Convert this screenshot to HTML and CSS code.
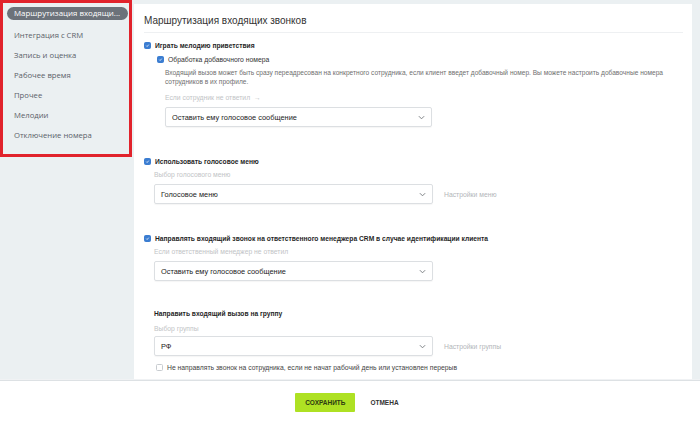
FILE: index.html
```html
<!DOCTYPE html>
<html lang="ru">
<head>
    <meta charset="UTF-8">
    <meta name="viewport" content="width=device-width, initial-scale=1.0">
    <title>Маршрутизация входящих звонков</title>
    <link rel="stylesheet" href="styles.css">
</head>
<body>
    <div class="app">
        <div class="workspace">
            <nav class="sidebar">
                <a class="nav-item active">Маршрутизация входящи...</a>
                <a class="nav-item">Интеграция с CRM</a>
                <a class="nav-item">Запись и оценка</a>
                <a class="nav-item">Рабочее время</a>
                <a class="nav-item">Прочее</a>
                <a class="nav-item">Мелодии</a>
                <a class="nav-item">Отключение номера</a>
                <div class="highlight"></div>
            </nav>
            <main class="card">
                <h1 class="card-title">Маршрутизация входящих звонков</h1>

                <section class="block block-first">
                    <label class="check-row strong">
                        <span class="checkbox checked"><svg viewBox="0 0 8 8"><path d="M2 4.2 L3.4 5.6 L6 2.6" /></svg></span>
                        Играть мелодию приветствия
                    </label>
                    <div class="nested">
                        <label class="check-row">
                            <span class="checkbox checked"><svg viewBox="0 0 8 8"><path d="M2 4.2 L3.4 5.6 L6 2.6" /></svg></span>
                            Обработка добавочного номера
                        </label>
                        <p class="desc">Входящий вызов может быть сразу переадресован на конкретного сотрудника, если клиент введет добавочный номер. Вы можете настроить добавочные номера сотрудников в их профиле.</p>
                        <div class="hint">Если сотрудник не ответил &nbsp;→</div>
                        <div class="field-row">
                            <div class="select select-short">
                                <span>Оставить ему голосовое сообщение</span>
                                <svg class="chevron" viewBox="0 0 8 5"><path d="M1 1 L4 4 L7 1" /></svg>
                            </div>
                        </div>
                    </div>
                </section>

                <section class="block">
                    <label class="check-row strong">
                        <span class="checkbox checked"><svg viewBox="0 0 8 8"><path d="M2 4.2 L3.4 5.6 L6 2.6" /></svg></span>
                        Использовать голосовое меню
                    </label>
                    <div class="indent">
                        <div class="hint">Выбор голосового меню</div>
                        <div class="field-row">
                            <div class="select">
                                <span>Голосовое меню</span>
                                <svg class="chevron" viewBox="0 0 8 5"><path d="M1 1 L4 4 L7 1" /></svg>
                            </div>
                            <a class="side-link">Настройки меню</a>
                        </div>
                    </div>
                </section>

                <section class="block">
                    <label class="check-row strong">
                        <span class="checkbox checked"><svg viewBox="0 0 8 8"><path d="M2 4.2 L3.4 5.6 L6 2.6" /></svg></span>
                        Направлять входящий звонок на ответственного менеджера CRM в случае идентификации клиента
                    </label>
                    <div class="indent">
                        <div class="hint">Если ответственный менеджер не ответил</div>
                        <div class="field-row">
                            <div class="select">
                                <span>Оставить ему голосовое сообщение</span>
                                <svg class="chevron" viewBox="0 0 8 5"><path d="M1 1 L4 4 L7 1" /></svg>
                            </div>
                        </div>
                    </div>
                </section>

                <section class="block block-group">
                    <div class="indent">
                        <div class="group-title">Направить входящий вызов на группу</div>
                        <div class="hint hint-group">Выбор группы</div>
                        <div class="field-row">
                            <div class="select">
                                <span>РФ</span>
                                <svg class="chevron" viewBox="0 0 8 5"><path d="M1 1 L4 4 L7 1" /></svg>
                            </div>
                            <a class="side-link">Настройки группы</a>
                        </div>
                        <label class="check-row plain-row">
                            <span class="checkbox"></span>
                            Не направлять звонок на сотрудника, если не начат рабочий день или установлен перерыв
                        </label>
                    </div>
                </section>
            </main>
        </div>
        <footer class="footer">
            <button class="btn-save">СОХРАНИТЬ</button>
            <button class="btn-cancel">ОТМЕНА</button>
        </footer>
    </div>
</body>
</html>
```

FILE: styles.css
```css
body {
    margin: 0;
    padding: 0;
    font-family: "Liberation Sans", Arial, sans-serif;
    background-color: #fff;
    color: #222;
}
.app {
    display: flex;
    flex-direction: column;
    width: 700px;
    height: 423px;
    overflow: hidden;
}
.workspace {
    display: flex;
    height: 380px;
    background-color: #ebf0f2;
    padding-top: 4px;
    box-sizing: border-box;
}
.sidebar {
    position: relative;
    width: 133px;
    flex: none;
    display: flex;
    flex-direction: column;
    padding: 6px 0 0 7px;
    box-sizing: border-box;
    margin-top: -4px;
    font-family: "Open Sans", sans-serif;
}
.nav-item {
    display: block;
    height: 20px;
    line-height: 20px;
    padding-left: 7px;
    font-size: 7.7px;
    color: #5a6169;
    white-space: nowrap;
}
.nav-item.active {
    height: 13px;
    line-height: 13px;
    width: 114px;
    margin: 1px 0 5px 0;
    padding-left: 7px;
    border-radius: 7px;
    background-color: #6c727a;
    color: #fff;
    font-size: 7.9px;
    overflow: hidden;
}
.highlight {
    position: absolute;
    left: 0;
    top: 0;
    width: 132px;
    height: 157px;
    border: 3px solid #e1232c;
    box-sizing: border-box;
}
.card {
    flex: 1;
    margin: 0 8px 0 1px;
    background-color: #fff;
    padding: 0 9px 0 10px;
}
.card-title {
    margin: 0;
    padding: 10px 0 4px 0;
    font-family: "Liberation Sans", Arial, sans-serif;
    font-size: 10px;
    line-height: 14px;
    font-weight: normal;
    color: #333;
    border-bottom: 1px solid #eef0f2;
}
.block {
    margin-top: 29px;
}
.block-first {
    margin-top: 7px;
}
.block-group {
    margin-top: 28px;
}
.check-row {
    display: flex;
    align-items: center;
    gap: 4px;
    height: 10px;
    font-size: 6.8px;
    color: #333;
    white-space: nowrap;
}
.check-row.strong {
    font-size: 6.7px;
    font-weight: bold;
    color: #1f1f1f;
}
.checkbox {
    width: 7px;
    height: 7px;
    flex: none;
    border-radius: 1.5px;
    border: 1px solid #c8ccd0;
    box-sizing: border-box;
    background-color: #fff;
    display: flex;
}
.checkbox.checked {
    background-color: #3b7dd1;
    border-color: #3b7dd1;
}
.checkbox svg {
    width: 100%;
    height: 100%;
    fill: none;
    stroke: #fff;
    stroke-width: 1.2;
}
.nested {
    padding-left: 13px;
    margin-top: 4px;
}
.nested .desc {
    margin: 5px 0 0 8px;
    font-size: 6.6px;
    line-height: 8.5px;
    color: #6f6f6f;
}
.nested .hint {
    margin: 7px 0 0 8px;
}
.nested .field-row {
    margin-left: 8px;
}
.indent {
    padding-left: 10px;
}
.hint {
    height: 10px;
    line-height: 10px;
    margin-top: 4px;
    font-size: 6.8px;
    color: #c2c4c6;
}
.hint-group {
    margin-top: 5px;
}
.group-title {
    height: 10px;
    line-height: 10px;
    font-size: 6.7px;
    font-weight: bold;
    color: #1f1f1f;
}
.field-row {
    display: flex;
    align-items: center;
    margin-top: 4px;
}
.hint-group + .field-row {
    margin-top: 2px;
}
.select {
    width: 279px;
    height: 20px;
    box-sizing: border-box;
    border: 1px solid #dcdfe2;
    border-radius: 2px;
    box-shadow: 0 1px 1px rgba(0, 0, 0, 0.04);
    display: flex;
    align-items: center;
    justify-content: space-between;
    padding: 0 6px 0 6px;
    font-size: 7.4px;
    color: #222;
}
.select-short {
    width: 267px;
}
.chevron {
    width: 7px;
    height: 5px;
    fill: none;
    stroke: #7a7e82;
    stroke-width: 1.1;
}
.side-link {
    margin-left: 11px;
    font-size: 6.8px;
    color: #b3b6b9;
}
.plain-row {
    margin-top: 6px;
    padding-left: 2px;
    font-weight: normal;
    color: #444;
}
.footer {
    height: 43px;
    flex: none;
    box-sizing: border-box;
    border-top: 1px solid #dde1e4;
    box-shadow: 0 -1px 0 #f0f2f4;
    display: flex;
    align-items: flex-start;
    justify-content: center;
    gap: 15px;
    padding: 12px 6px 0 0;
    background-color: #fff;
}
.btn-save {
    width: 60px;
    height: 19px;
    border: none;
    border-radius: 1px;
    background-color: #aee123;
    font-family: "Liberation Sans", Arial, sans-serif;
    font-size: 6.5px;
    font-weight: bold;
    color: #2d3a12;
    padding: 0;
}
.btn-cancel {
    height: 19px;
    border: none;
    background: none;
    font-family: "Liberation Sans", Arial, sans-serif;
    font-size: 6.5px;
    font-weight: bold;
    color: #333;
    padding: 0;
}
```
